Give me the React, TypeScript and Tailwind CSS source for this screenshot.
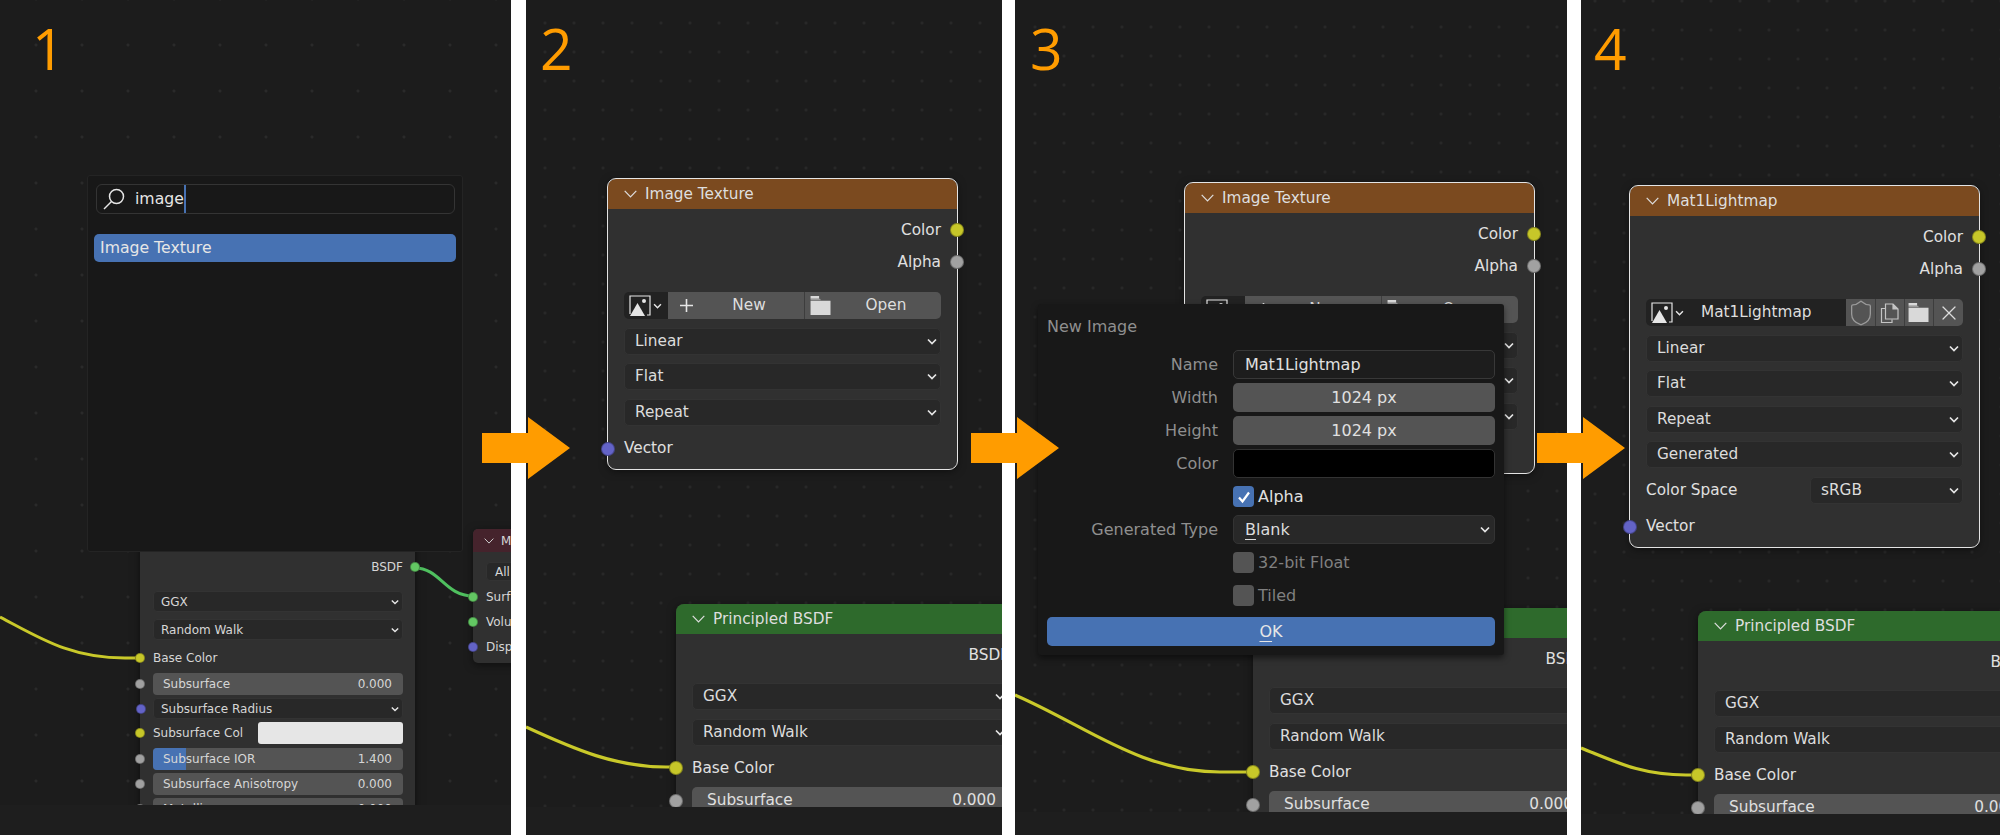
import { Shield, X } from "lucide-react";
import type { ReactNode } from "react";

const YELLOW = "bg-[#c7c729]";
const GREY = "bg-[#a1a1a1]";
const PURPLE = "bg-[#6363c7]";
const GREEN = "bg-[#63c763]";

const Chevron = ({ className = "" }: { className?: string }) => (
  <svg viewBox="0 0 10 7" className={`shrink-0 fill-none stroke-[#e6e6e6] ${className}`}>
    <path d="M1 1.5 5 5.5 9 1.5" strokeWidth="1.7" />
  </svg>
);

const HeaderChevron = ({ className = "" }: { className?: string }) => (
  <svg viewBox="0 0 13 8" className={`shrink-0 fill-none stroke-[#dedede] ${className}`}>
    <path d="M.7.8 6.5 6.8 12.3.8" strokeWidth="1.2" />
  </svg>
);

const ImageIcon = () => (
  <svg viewBox="0 0 22 22" className="w-[22px] h-[22px] shrink-0">
    <path d="M1 19V1h20v19h-3" fill="none" stroke="#e6e6e6" strokeWidth="1.2" />
    <path d="M1 21 8.5 8 16 21z" fill="#e6e6e6" />
    <circle cx="15" cy="6" r="2" fill="#e6e6e6" />
  </svg>
);

const FolderIcon = () => (
  <svg viewBox="0 0 22 20" className="w-[22px] h-[19px] shrink-0" fill="#d9d9d9">
    <path d="M0 0h9v3H0z" />
    <path d="M0 5h21v15H0z" />
    <path d="M0 3h10l1 1.4H0z" fill="#9a9a9a" />
  </svg>
);

const CopyIcon = () => (
  <svg viewBox="0 0 20 20" className="w-5 h-5 fill-none stroke-[#c4c4c4]" strokeWidth="1.2">
    <path d="M5 5.5H1.5v14H12v-3" />
    <path d="M5.5 1H13l5 5v10H5.5z" />
    <path d="M13 1v5h5" fill="#c4c4c4" />
  </svg>
);

const Socket = ({ color, className }: { color: string; className: string }) => (
  <span className={`absolute top-1/2 -translate-y-1/2 rounded-full border border-black/30 z-10 ${color} ${className}`} />
);

// sockets of the big nodes, centered on the node border
const Row = ({ children, socket }: { children: ReactNode; socket?: string }) => (
  <div className="relative flex items-center h-[27px] text-[15.3px] text-[#e0e0e0]">
    {socket && <Socket color={socket} className="w-[14px] h-[14px] left-[-23px]" />}
    {children}
  </div>
);

const Dropdown = ({ label, className = "" }: { label: string; className?: string }) => (
  <div className={`flex items-center justify-between h-[27px] pl-[10px] pr-[3px] rounded-[5px] bg-[#282828] border border-[#333333] text-[15.3px] text-[#dcdcdc] ${className}`}>
    <span>{label}</span>
    <Chevron className="w-[10px] h-[7px]" />
  </div>
);

const Node = ({ title, header, className, selected, children }: { title: string; header: string; className: string; selected?: boolean; children: ReactNode }) => (
  <div className={`absolute w-[349px] rounded-[8px] bg-[#303030] shadow-[0_2px_8px_rgba(0,0,0,0.5)] ${className}`}>
    <div className={`flex items-center gap-[8px] h-[30px] pl-[16px] rounded-t-[8px] text-[15.3px] text-[#dedede] ${header}`}>
      <HeaderChevron className="w-[13px] h-[8px]" />
      <span>{title}</span>
    </div>
    <div className="flex flex-col pt-[5px] pb-[6.5px] px-[16px]">{children}</div>
    {selected && <span className="absolute -inset-[1px] rounded-[9px] border-[1.5px] border-[#e4e4e4] pointer-events-none" />}
  </div>
);

const Outputs = () => (
  <>
    <div className="relative flex items-center justify-end h-[32px] text-[15.3px] text-[#e0e0e0]">
      <Socket color={YELLOW} className="w-[14px] h-[14px] right-[-23px]" />
      Color
    </div>
    <div className="relative flex items-center justify-end h-[32px] mb-[14px] text-[15.3px] text-[#e0e0e0]">
      <Socket color={GREY} className="w-[14px] h-[14px] right-[-23px]" />
      Alpha
    </div>
  </>
);

const ImageTexture = ({ className }: { className: string }) => (
  <Node title="Image Texture" header="bg-[#7b4a1f]" className={className} selected>
    <Outputs />
    <div className="flex h-[27px] rounded-[5px] overflow-hidden text-[15.3px] text-[#dedede]">
      <div className="flex items-center gap-[2px] w-[44px] pl-[5px] bg-[#222222]">
        <ImageIcon />
        <Chevron className="w-[9px] h-[6px]" />
      </div>
      <div className="flex items-center flex-1 bg-[#545454] border-r border-[#3d3d3d]">
        <span className="w-[26px] pl-[12px] shrink-0">
          <svg viewBox="0 0 13 13" className="w-[13px] h-[13px] stroke-[#e6e6e6]" strokeWidth="1.6"><path d="M6.5 0v13M0 6.5h13" /></svg>
        </span>
        <span className="flex-1 text-center">New</span>
      </div>
      <div className="flex items-center flex-1 bg-[#545454]">
        <span className="w-[26px] pl-[5px] shrink-0"><FolderIcon /></span>
        <span className="flex-1 text-center">Open</span>
      </div>
    </div>
    <Dropdown label="Linear" className="mt-[8.5px]" />
    <Dropdown label="Flat" className="mt-[8.5px]" />
    <Dropdown label="Repeat" className="mt-[8.5px]" />
    <div className="mt-[9.5px]">
      <Row socket={PURPLE}>Vector</Row>
    </div>
  </Node>
);

const Principled = ({ className }: { className: string }) => (
  <Node title="Principled BSDF" header="bg-[#2e6a2c]" className={className}>
    <div className="relative flex items-center justify-end h-[32px] mb-[12px] text-[15.3px] text-[#e0e0e0]">BSDF</div>
    <Dropdown label="GGX" />
    <Dropdown label="Random Walk" className="mt-[9px]" />
    <div className="mt-[8.5px]">
      <Row socket={YELLOW}>Base Color</Row>
    </div>
    <div className="relative flex items-center justify-between h-[27px] mt-[5.5px] pl-[15px] pr-[13px] rounded-[5px] bg-[#545454] text-[15.3px] text-[#e0e0e0]">
      <Socket color={GREY} className="w-[14px] h-[14px] left-[-23px]" />
      <span>Subsurface</span>
      <span>0.000</span>
    </div>
  </Node>
);

const Link = ({ d, color = "#c9c92a", width = 3.2 }: { d: string; color?: string; width?: number }) => (
  <svg className="absolute inset-0 w-full h-full pointer-events-none">
    <path d={d} fill="none" stroke={color} strokeWidth={width} />
  </svg>
);

const Digit = ({ value, className }: { value: string; className: string }) => (
  <span className={`absolute top-[20px] z-20 font-['Open_Sans',sans-serif] font-medium text-[57px] leading-none text-[#ff9c00] ${className}`}>{value}</span>
);

const Arrow = ({ className }: { className: string }) => (
  <svg viewBox="0 0 88 62" className={`absolute top-[417px] w-[88px] h-[62px] z-30 fill-[#ff9c00] ${className}`}>
    <path d="M0 16h46V0l42 31-42 31V46H0z" />
  </svg>
);

// small scale rows of the node under the search popup
const SmallSlider = ({ label, value, socket, fill }: { label: string; value: string; socket: string; fill?: boolean }) => (
  <div className="relative flex items-center justify-between h-[22px] pl-[10px] pr-[11px] rounded-[4px] bg-[#545454] text-[12px] text-[#d6d6d6]">
    <Socket color={socket} className="w-[10px] h-[10px] left-[-18px]" />
    {fill && <span className="absolute left-0 top-0 bottom-0 w-[33px] rounded-l-[4px] bg-[#4772b3]" />}
    <span className="relative">{label}</span>
    <span className="relative">{value}</span>
  </div>
);

const SmallDropdown = ({ label, socket }: { label: string; socket?: string }) => (
  <div className="relative flex items-center justify-between h-[21px] pl-[7px] pr-[3px] rounded-[4px] bg-[#282828] border border-[#333333] text-[12px] text-[#d6d6d6]">
    {socket && <Socket color={socket} className="w-[10px] h-[10px] left-[-18px]" />}
    <span>{label}</span>
    <Chevron className="w-[8px] h-[6px]" />
  </div>
);

const SearchPanel = () => (
  <div className="relative flex-1 overflow-hidden bg-[#1c1c1c] bg-[radial-gradient(circle,#2a2a2a_1.2px,transparent_1.8px)] bg-[size:46px_46px] bg-[position:13px_22px]">
    <Digit value="1" className="left-[32px]" />
    <Link d="M0 617C40 638 70 658 125 658L140 658" width={3} />
    <Link d="M415 568C440 568 445 596 473 596" color="#4fc05f" width={3} />

    {/* shader node, mostly behind the popup */}
    <div className="absolute left-[140px] top-[530px] w-[275px] h-[400px] bg-[#303030] shadow-[0_2px_8px_rgba(0,0,0,0.5)] pt-[25px] pl-[13px] pr-[12px]">
      <div className="relative flex items-center justify-end h-[24px] mb-[12px] text-[12px] text-[#d6d6d6]">
        <Socket color={GREEN} className="w-[10px] h-[10px] right-[-17px]" />
        BSDF
      </div>
      <SmallDropdown label="GGX" />
      <div className="mt-[7px]"><SmallDropdown label="Random Walk" /></div>
      <div className="relative flex items-center h-[25px] mt-[5px] mb-[3px] text-[12px] text-[#d6d6d6]">
        <Socket color={YELLOW} className="w-[10px] h-[10px] left-[-18px]" />
        Base Color
      </div>
      <div className="flex flex-col gap-[3.2px]">
        <SmallSlider label="Subsurface" value="0.000" socket={GREY} />
        <SmallDropdown label="Subsurface Radius" socket={PURPLE} />
        <div className="relative flex items-center justify-between h-[22px] text-[12px] text-[#d6d6d6]">
          <Socket color={YELLOW} className="w-[10px] h-[10px] left-[-18px]" />
          <span>Subsurface Col</span>
          <span className="w-[145px] h-[22px] rounded-[3px] bg-[#e6e6e6]" />
        </div>
        <SmallSlider label="Subsurface IOR" value="1.400" socket={GREY} fill />
        <SmallSlider label="Subsurface Anisotropy" value="0.000" socket={GREY} />
        <SmallSlider label="Metallic" value="0.000" socket={GREY} />
      </div>
    </div>

    {/* material output, cut off by the panel edge */}
    <div className="absolute left-[473px] top-[529px] w-[180px] h-[134px] rounded-[5px] bg-[#303030] shadow-[0_2px_8px_rgba(0,0,0,0.5)] text-[12px] text-[#d6d6d6]">
      <div className="flex items-center gap-[7px] h-[23px] pl-[11px] rounded-t-[5px] bg-[#45232c]">
        <HeaderChevron className="w-[10px] h-[6px]" />
        <span>Material Output</span>
      </div>
      <div className="flex flex-col pl-[13px] pt-[10px]">
        <div className="flex items-center h-[19px] w-[120px] pl-[8px] rounded-[4px] bg-[#282828] border border-[#333333]">All</div>
        <div className="relative flex items-center h-[25px] mt-[3px]">
          <Socket color={GREEN} className="w-[10px] h-[10px] left-[-18px]" />
          Surface
        </div>
        <div className="relative flex items-center h-[25px]">
          <Socket color={GREEN} className="w-[10px] h-[10px] left-[-18px]" />
          Volume
        </div>
        <div className="relative flex items-center h-[25px]">
          <Socket color={PURPLE} className="w-[10px] h-[10px] left-[-18px]" />
          Displacement
        </div>
      </div>
    </div>

    {/* node search popup */}
    <div className="absolute left-[87px] top-[175px] w-[376px] h-[377px] flex flex-col px-[6px] pt-[8px] bg-[#181818] border border-[#242424] rounded-[3px] z-10">
      <div className="flex items-center h-[30px] ml-[2px] mr-[1px] pl-[6px] rounded-[6px] bg-[#181818] border border-[#343434] text-[15.7px] text-[#e6e6e6]">
        <svg viewBox="0 0 22 22" className="w-[22px] h-[22px] mr-[10px] fill-none stroke-[#e6e6e6]" strokeWidth="1.5">
          <circle cx="13.5" cy="8.5" r="7" />
          <path d="M8.5 13.5 1 21" />
        </svg>
        <span>image</span>
        <span className="w-[2px] h-[28px] bg-[#4772b3]" />
      </div>
      <div className="flex items-center h-[28px] mt-[20px] pl-[6px] rounded-[5px] bg-[#4772b3] text-[15.7px] text-[#e6e6e6]">Image Texture</div>
    </div>
  </div>
);

const DialogLabel = ({ children }: { children: ReactNode }) => (
  <span className="text-right text-[#8f8f8f]">{children}</span>
);

const NewImageDialog = () => (
  <div className="absolute left-[23px] top-[304px] w-[466px] h-[351px] z-10 flex flex-col pl-[9px] pr-[9px] bg-[#181818] rounded-[3px] shadow-[0_3px_6px_rgba(0,0,0,0.5)] text-[16px]">
    <div className="flex items-center h-[46px] text-[#8f8f8f]">New Image</div>
    <div className="grid grid-cols-[171px_262px] gap-x-[15px] gap-y-[4px] auto-rows-[29px] items-center">
      <DialogLabel>Name</DialogLabel>
      <div className="flex items-center h-full pl-[11px] rounded-[5px] bg-[#1d1d1d] border border-[#383838] text-[#e0e0e0]">Mat1Lightmap</div>
      <DialogLabel>Width</DialogLabel>
      <div className="flex items-center justify-center h-full rounded-[5px] bg-[#545454] text-[#e0e0e0]">1024 px</div>
      <DialogLabel>Height</DialogLabel>
      <div className="flex items-center justify-center h-full rounded-[5px] bg-[#545454] text-[#e0e0e0]">1024 px</div>
      <DialogLabel>Color</DialogLabel>
      <div className="h-full rounded-[5px] bg-black border border-[#333333]" />
      <span />
      <div className="flex items-center gap-[4px] text-[#e0e0e0]">
        <span className="flex items-center justify-center w-[21px] h-[21px] rounded-[4px] bg-[#4772b3]">
          <svg viewBox="0 0 14 14" className="w-[14px] h-[14px] fill-none stroke-white" strokeWidth="2.2"><path d="M2 7.5 5.5 11.5 12 2.5" /></svg>
        </span>
        Alpha
      </div>
      <DialogLabel>Generated Type</DialogLabel>
      <div className="flex items-center justify-between h-full pl-[11px] pr-[4px] rounded-[5px] bg-[#282828] border border-[#333333] text-[#dcdcdc]">
        <span><span className="underline underline-offset-[4px]">B</span>lank</span>
        <Chevron className="w-[10px] h-[7px]" />
      </div>
      <span />
      <div className="flex items-center gap-[4px] text-[#808080]">
        <span className="w-[21px] h-[21px] rounded-[4px] bg-[#545454]" />
        32-bit Float
      </div>
      <span />
      <div className="flex items-center gap-[4px] text-[#808080]">
        <span className="w-[21px] h-[21px] rounded-[4px] bg-[#545454]" />
        Tiled
      </div>
    </div>
    <div className="flex items-center justify-center h-[29px] mt-[7px] rounded-[5px] bg-[#4772b3] text-[#e6e6e6]">
      <span><span className="underline underline-offset-[4px]">O</span>K</span>
    </div>
  </div>
);

const LightmapNode = () => (
  <Node title="Mat1Lightmap" header="bg-[#7b4a1f]" className="left-[49px] top-[186px]" selected>
    <Outputs />
    <div className="flex h-[27px] rounded-[5px] overflow-hidden text-[15.3px] text-[#dedede]">
      <div className="flex items-center gap-[2px] w-[44px] pl-[5px] bg-[#222222]">
        <ImageIcon />
        <Chevron className="w-[9px] h-[6px]" />
      </div>
      <div className="flex items-center w-[156px] pl-[11px] bg-[#222222]">Mat1Lightmap</div>
      <div className="flex items-center justify-center w-[30px] bg-[#545454] border-r border-[#3d3d3d]">
        <Shield className="w-[28px] h-[28px] shrink-0 text-[#9a9a9a]" strokeWidth={1.1} />
      </div>
      <div className="flex items-center justify-center w-[29px] bg-[#545454] border-r border-[#3d3d3d]"><CopyIcon /></div>
      <div className="flex items-center justify-center w-[29px] bg-[#545454] border-r border-[#3d3d3d]"><FolderIcon /></div>
      <div className="flex items-center justify-center flex-1 bg-[#545454]">
        <X className="w-[24px] h-[24px] shrink-0 text-[#dcdcdc]" strokeWidth={1.2} />
      </div>
    </div>
    <Dropdown label="Linear" className="mt-[8.5px]" />
    <Dropdown label="Flat" className="mt-[8.5px]" />
    <Dropdown label="Repeat" className="mt-[8.5px]" />
    <Dropdown label="Generated" className="mt-[8.5px]" />
    <div className="flex items-center justify-between h-[27px] mt-[8.5px] text-[15.3px] text-[#e0e0e0]">
      <span>Color Space</span>
      <Dropdown label="sRGB" className="w-[153px]" />
    </div>
    <div className="mt-[9.5px]">
      <Row socket={PURPLE}>Vector</Row>
    </div>
  </Node>
);

const App = () => {
  return (
    <div className="relative flex w-[2000px] h-[835px] overflow-hidden bg-white font-['DejaVu_Sans',sans-serif]">
      <Arrow className="left-[482px]" />
      <Arrow className="left-[971px]" />
      <Arrow className="left-[1537px]" />

      {/* 1: search */}
      <section className="flex flex-col w-[511px] bg-[#1e1e1e]">
        <SearchPanel />
        <div className="h-[30px] shrink-0" />
      </section>

      {/* 2: new node */}
      <section className="flex flex-col w-[476px] ml-[15px] bg-[#1e1e1e]">
        <div className="relative flex-1 overflow-hidden bg-[#1c1c1c] bg-[radial-gradient(circle,#2a2a2a_1px,transparent_1.6px)] bg-[size:29px_29px] bg-[position:4.5px_8.5px]">
          <Digit value="2" className="left-[14px]" />
          <Link d="M0 727C50 750 90 767 140 767L150 767" />
          <ImageTexture className="left-[82px] top-[179px]" />
          <Principled className="left-[150px] top-[604px]" />
        </div>
        <div className="h-[28px] shrink-0" />
      </section>

      {/* 3: new image dialog */}
      <section className="flex flex-col w-[552px] ml-[13px] bg-[#1e1e1e]">
        <div className="relative flex-1 overflow-hidden bg-[#1c1c1c] bg-[radial-gradient(circle,#2a2a2a_1px,transparent_1.6px)] bg-[size:29px_29px] bg-[position:5.5px_12.5px]">
          <Digit value="3" className="left-[15px]" />
          <Link d="M0 695C70 725 125 772 205 772L238 772" />
          <ImageTexture className="left-[170px] top-[183px]" />
          <Principled className="left-[238px] top-[608px]" />
          <NewImageDialog />
        </div>
        <div className="h-[23px] shrink-0" />
      </section>

      {/* 4: result */}
      <section className="flex flex-col w-[419px] ml-[14px] bg-[#1e1e1e]">
        <div className="relative flex-1 overflow-hidden bg-[#1c1c1c] bg-[radial-gradient(circle,#2a2a2a_1px,transparent_1.6px)] bg-[size:29px_29px] bg-[position:-0.5px_15.5px]">
          <Digit value="4" className="left-[13px]" />
          <Link d="M0 748C35 762 60 775 105 775L117 775" />
          <LightmapNode />
          <Principled className="left-[117px] top-[611px]" />
        </div>
        <div className="h-[21px] shrink-0" />
      </section>
    </div>
  );
};

export default App;
